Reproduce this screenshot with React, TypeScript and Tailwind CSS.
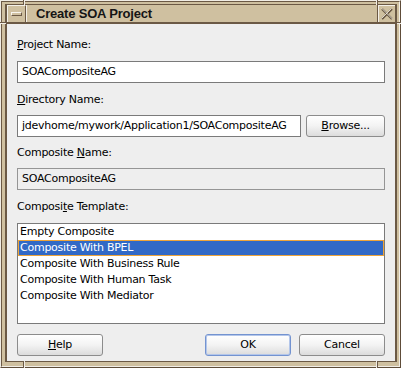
import type { ReactNode } from "react";

const templates = [
  "Empty Composite",
  "Composite With BPEL",
  "Composite With Business Rule",
  "Composite With Human Task",
  "Composite With Mediator",
];

function Label({ children }: { children: ReactNode }) {
  return <div className="h-[14px] leading-[14px] whitespace-nowrap">{children}</div>;
}

function Field({ value, disabled }: { value: string; disabled?: boolean }) {
  return (
    <div
      className={
        disabled
          ? "h-[22px] border border-[#959595] bg-[#eeeeee] pl-[4px] leading-[20px] whitespace-nowrap overflow-hidden"
          : "h-[22px] border border-[#7a7a7a] bg-white pl-[4px] leading-[20px] whitespace-nowrap overflow-hidden"
      }
    >
      {value}
    </div>
  );
}

function Button({
  children,
  width,
  focused,
}: {
  children: ReactNode;
  width: string;
  focused?: boolean;
}) {
  return (
    <div
      className={
        (focused
          ? "border-[#7393d0] shadow-[inset_0_0_0_1px_#b3c6ea] "
          : "border-[#8c8c8c] ") +
        width +
        " h-[22px] rounded-[3px] border bg-linear-to-b from-white via-[#f3f3f3] to-[#dcdcdc] text-center leading-[20px]"
      }
    >
      {children}
    </div>
  );
}

export default function App() {
  return (
    <div className="relative w-[401px] h-[368px] bg-[#cfc0a0] border border-t-[#f1ede5] border-l-[#f1ede5] border-r-[#5e4c39] border-b-[#5e4c39] font-['DejaVu_Sans',sans-serif] text-[11px] tracking-[-0.25px] text-black">
      <div className="h-full border border-t-[#6b5945] border-l-[#6b5945] border-r-[#f1ede5] border-b-[#f1ede5] pt-[2px] pl-[3px] pr-[2px] pb-[4px]">
        <div className="h-full flex flex-col border-[#6b5945] border-t border-l-2 border-r-2 border-b">
          {/* title bar */}
          <div className="h-[19px] flex border-b-2 border-[#6b5945] bg-[#cfc0a0]">
            <div className="w-[19px] h-[17px] border-l border-t border-[#f4f0e8] border-r border-r-[#6b5945] flex items-center justify-center">
              <div className="w-[11px] h-[4px] border border-t-[#f8f5ee] border-l-[#f8f5ee] border-r-[#6b5945] border-b-[#6b5945] bg-[#cfc0a0]" />
            </div>
            <div className="flex-1 h-[17px] border-l border-[#f4f0e8] border-r border-r-[#6b5945] pl-[9px] font-['Liberation_Sans',sans-serif] font-bold text-[13px] tracking-[-0.2px] leading-[17px] text-[#151515]">
              Create SOA Project
            </div>
            <div className="w-[17px] h-[17px] border-l border-t border-[#f4f0e8] flex items-center justify-center">
              <svg width="14" height="14" viewBox="0 0 14 14">
                <path d="M2 2 L12 12 M12 2 L2 12" stroke="#6b5945" strokeWidth="2.2" />
                <path d="M2 1.5 L12.5 12 M11.5 1.5 L1.5 11.5" stroke="#f8f5ee" strokeWidth="0.8" />
              </svg>
            </div>
          </div>

          {/* content */}
          <div className="flex-1 bg-[#eeeeee] pl-[10px] pr-[10px] pt-[14px]">
            <Label>
              <u>P</u>roject Name:
            </Label>
            <div className="mt-[9px]">
              <Field value="SOACompositeAG" />
            </div>

            <div className="mt-[10px]">
              <Label>
                <u>D</u>irectory Name:
              </Label>
            </div>
            <div className="mt-[8px] flex gap-[5px]">
              <div className="w-[284px]">
                <Field value="jdevhome/mywork/Application1/SOACompositeAG" />
              </div>
              <Button width="w-[79px]">
                <u>B</u>rowse...
              </Button>
            </div>

            <div className="mt-[9px]">
              <Label>
                Composite <u>N</u>ame:
              </Label>
            </div>
            <div className="mt-[8px]">
              <Field value="SOACompositeAG" disabled />
            </div>

            <div className="mt-[10px]">
              <Label>
                Composi<u>t</u>e Template:
              </Label>
            </div>
            <div className="mt-[9px] h-[101px] border border-[#7a7a7a] bg-white">
              {templates.map((t, i) =>
                i === 1 ? (
                  <div
                    key={t}
                    className="h-[16px] border border-[#eda43a] bg-[#3169c6] pl-[1px] leading-[14px] text-white whitespace-nowrap"
                  >
                    {t}
                  </div>
                ) : (
                  <div key={t} className="h-[16px] pl-[2px] leading-[16px] whitespace-nowrap">
                    {t}
                  </div>
                )
              )}
            </div>

            <div className="mt-[10px] flex">
              <Button width="w-[86px]">
                <u>H</u>elp
              </Button>
              <div className="flex-1" />
              <Button width="w-[86px]" focused>
                OK
              </Button>
              <div className="w-[8px]" />
              <Button width="w-[86px]">Cancel</Button>
            </div>
          </div>
        </div>
      </div>

      {/* resize handle notches in the frame */}
      <div className="absolute left-[22px] top-[-1px] w-[1px] h-[5px] bg-[#6b5945]" />
      <div className="absolute left-[23px] top-[-1px] w-[1px] h-[5px] bg-[#f1ede5]" />
      <div className="absolute right-[22px] top-[-1px] w-[1px] h-[5px] bg-[#6b5945]" />
      <div className="absolute right-[23px] top-[-1px] w-[1px] h-[5px] bg-[#f1ede5]" />
      <div className="absolute left-[-1px] top-[21px] w-[6px] h-[1px] bg-[#6b5945]" />
      <div className="absolute left-[-1px] top-[22px] w-[6px] h-[1px] bg-[#f1ede5]" />
      <div className="absolute right-[-1px] top-[21px] w-[4px] h-[1px] bg-[#6b5945]" />
      <div className="absolute right-[-1px] top-[22px] w-[4px] h-[1px] bg-[#f1ede5]" />
      <div className="absolute left-[22px] bottom-[-1px] w-[1px] h-[7px] bg-[#6b5945]" />
      <div className="absolute left-[23px] bottom-[-1px] w-[1px] h-[7px] bg-[#f1ede5]" />
      <div className="absolute right-[22px] bottom-[-1px] w-[1px] h-[7px] bg-[#6b5945]" />
      <div className="absolute right-[23px] bottom-[-1px] w-[1px] h-[7px] bg-[#f1ede5]" />
    </div>
  );
}
